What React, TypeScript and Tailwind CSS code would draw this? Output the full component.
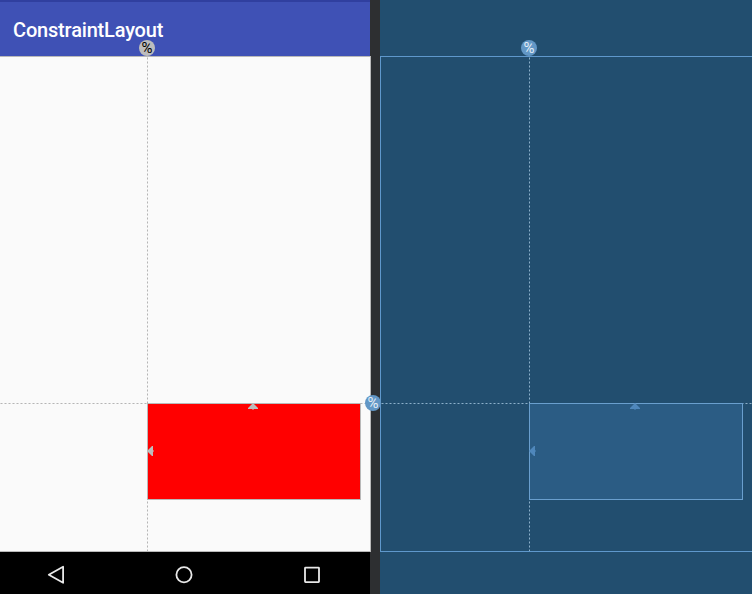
import React from "react";

type Tone = "design" | "blueprint";

const tones = {
  design: {
    guide: "#d6d6d6",
    guideCore: "#b5b5b5",
    handle: "#bdbdbd",
    frame: "w-[371px] border-l-0 border-[#b9b9b9] bg-[#fafafa]",
    widget: "left-[147px] border-[#b9b9b9] bg-[#ff0000]",
    badge: "bg-[#bdbdbd] text-black",
    vertical: "M147.5 1V495",
    horizontal: "M0 347.5H370",
  },
  blueprint: {
    guide: "#5580a0",
    guideCore: "#8fb0c8",
    handle: "#4f87bb",
    frame: "w-[372px] border-r-0 border-[#5f98cc] bg-[#224e6f]",
    widget: "left-[148px] border-[#6a9fce] bg-[#2b5c84]",
    badge: "bg-[#6297c6] text-[#e4edf5]",
    vertical: "M148.5 1V495",
    horizontal: "M0 347.5H371",
  },
};

function PercentBadge({ tone, className }: { tone: Tone; className: string }) {
  return (
    <span
      className={`absolute z-10 flex size-4 items-center justify-center rounded-full font-['Roboto',sans-serif] text-[15px] leading-none ${tones[tone].badge} ${className}`}
    >
      %
    </span>
  );
}

function Canvas({ tone }: { tone: Tone }) {
  const t = tones[tone];
  return (
    <section className={`relative h-[496px] border ${t.frame}`}>
      <svg className="absolute -top-px left-0 h-[496px] w-[372px]" shapeRendering="crispEdges" fill="none">
        <g stroke={t.guide} strokeDasharray="3 1">
          <path d={t.vertical} />
          <path d={t.horizontal} />
        </g>
        <g stroke={t.guideCore} strokeDasharray="1 3" strokeDashoffset="-1">
          <path d={t.vertical} />
          <path d={t.horizontal} />
        </g>
      </svg>
      <div className={`absolute top-[346px] h-[97px] w-[214px] border ${t.widget}`}>
        <svg className="absolute -top-px left-[100px] h-[7px] w-[10px]" viewBox="0 0 10 7" fill={t.handle}>
          <path d="M5 0 10 5V6H5.5V7H4.5V6H0V5Z" />
        </svg>
        <svg className="absolute -left-px top-[42px] h-[10px] w-[7px]" viewBox="0 0 7 10" fill={t.handle}>
          <path d="M0 5 5 0H6V4.5H7V5.5H6V10H5Z" />
        </svg>
      </div>
      <PercentBadge tone={tone} className={tone === "design" ? "-top-[17px] left-[139px]" : "-top-[17px] left-[140px]"} />
    </section>
  );
}

export default function App() {
  return (
    <main className="relative flex h-[594px] w-[752px] overflow-hidden bg-[#2d2f31]">
      <div className="flex w-[380px] flex-col">
        <header className="flex h-14 w-[370px] items-center border-t-2 border-[#303f9f] bg-[#3f51b5] pl-[13px] pt-0.5">
          <h1 className="font-['Roboto',sans-serif] text-[20px] font-medium leading-6 tracking-[-0.18px] text-white">ConstraintLayout</h1>
        </header>
        <Canvas tone="design" />
        <nav className="flex h-[42px] w-[370px] items-center bg-black pt-1">
          <svg className="h-[42px] w-[370px]" viewBox="0 0 370 42" fill="none" stroke="#e8e8e8" strokeWidth="1.8" strokeLinejoin="round">
            <path d="M48.8 20.8 63.1 12.8V28.8Z" />
            <circle cx="184" cy="20.8" r="7.6" />
            <rect x="305" y="13.7" width="14" height="14.4" rx=".5" />
          </svg>
        </nav>
      </div>
      <div className="flex w-[372px] flex-col bg-[#224e6f] pt-14">
        <Canvas tone="blueprint" />
      </div>
      <PercentBadge tone="blueprint" className="left-[365px] top-[395px]" />
    </main>
  );
}
